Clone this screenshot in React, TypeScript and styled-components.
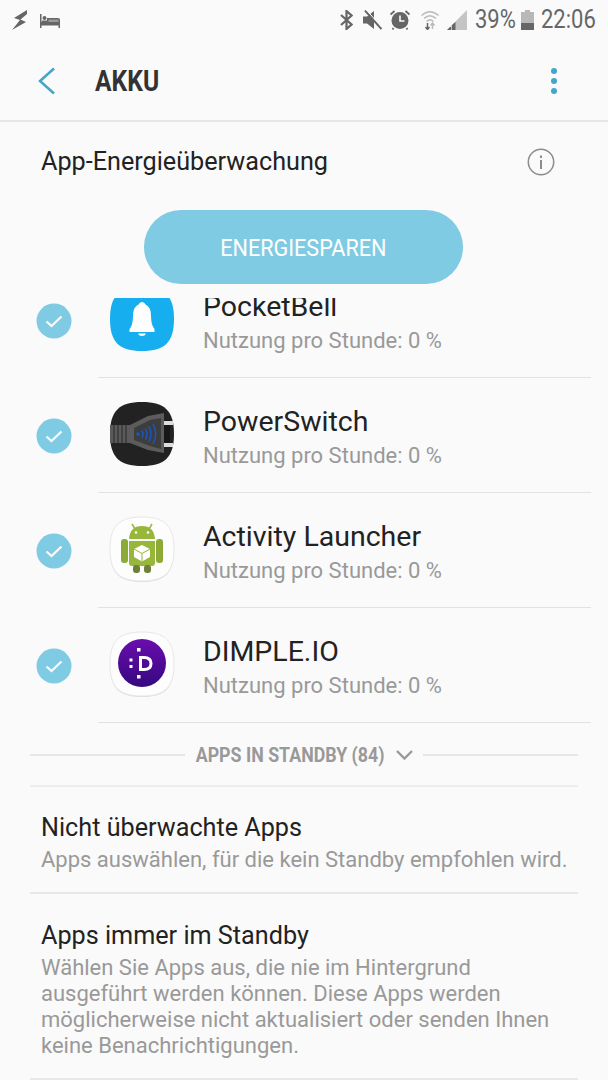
import React from 'react';
import styled, { createGlobalStyle } from 'styled-components';

const GlobalStyle = createGlobalStyle`
    html, body {
        margin: 0;
        padding: 0;
        background: #fafafa;
    }
    * {
        box-sizing: border-box;
    }
`;

const BoltIcon = () => (
    <svg width="15" height="20" viewBox="0 0 15 20">
        <path d="M15 0 L2 8 L8 10 L0 20 L14 12 L8.500 9.500 L15 4 Z" fill="#666" />
    </svg>
);

const BedIcon = () => (
    <svg width="20" height="14" viewBox="0 0 20 14">
        <path d="M0 0 H1.500 V8 H7 V4 H18 Q20 4 20 6 V14 H18.500 V11.500 H1.500 V14 H0 Z" fill="#666" />
        <circle cx="4.500" cy="4" r="2" fill="#666" />
        <rect x="2" y="6.500" width="5" height="1.500" fill="#666" />
        <rect x="8.500" y="5.500" width="10" height="2.500" fill="#9a9a9a" />
    </svg>
);

const BluetoothIcon = () => (
    <svg width="13" height="20" viewBox="0 0 13 20">
        <path d="M1 5 L11.500 14.500 L6.500 19 V1 L11.500 5.500 L1 15" fill="none" stroke="#666" strokeWidth="2.200" />
    </svg>
);

const MuteIcon = () => (
    <svg width="19" height="20" viewBox="0 0 19 20">
        <path d="M0 6.500 H4 L11 1 V19 L4 13.500 H0 Z" fill="#666" />
        <path d="M2 0.500 L18.500 19" stroke="#666" strokeWidth="2" />
        <path d="M3.500 0 L19 17.500" stroke="#fafafa" strokeWidth="1" />
    </svg>
);

const AlarmIcon = () => (
    <svg width="20" height="20" viewBox="0 0 20 20">
        <circle cx="10" cy="10.500" r="8.500" fill="#666" />
        <path d="M10 5.500 V11 H14.500" fill="none" stroke="#fafafa" strokeWidth="1.600" />
        <path d="M0.500 4.500 L4.500 1 M19.500 4.500 L15.500 1 M3.500 18 L2.500 19.500 M16.500 18 L17.500 19.500" stroke="#666" strokeWidth="1.800" />
    </svg>
);

const WifiIcon = () => (
    <svg width="18" height="20" viewBox="0 0 18 20">
        <path d="M0.500 5.500 Q9 -2 17.500 5.500 M3 8.500 Q9 3 15 8.500 M5.500 11.500 Q9 8 12.500 11.500" fill="none" stroke="#bbb" strokeWidth="1.500" />
        <path d="M6.500 13 V19 M4.500 17 L6.500 19.500 L8.500 17" fill="none" stroke="#666" strokeWidth="1.500" />
        <path d="M11.500 19 V13.500 M9.500 15.500 L11.500 13 L13.500 15.500" fill="none" stroke="#bbb" strokeWidth="1.500" />
    </svg>
);

const SignalIcon = () => (
    <svg width="20" height="20" viewBox="0 0 20 20">
        <path d="M20 0 V20 H0 Z" fill="#c4c4c4" />
        <path d="M0 20 L3 17 H4 V20 Z M5 20 V15 L8.500 12 V20 Z" fill="#666" />
    </svg>
);

const BatteryIcon = () => (
    <svg width="13" height="20" viewBox="0 0 13 20">
        <path d="M4 0 H9 V2 H13 V20 H0 V2 H4 Z" fill="#b8b8b8" />
        <rect y="13" width="13" height="7" fill="#666" />
    </svg>
);

const BackIcon = () => (
    <svg width="18" height="28" viewBox="0 0 18 28">
        <path d="M16 1.500 L2 14 L16 26.500" fill="none" stroke="#42a5c9" strokeWidth="2.500" />
    </svg>
);

const MoreIcon = () => (
    <svg width="8" height="28" viewBox="0 0 8 28">
        <circle cx="4" cy="4" r="3" fill="#42a5c9" />
        <circle cx="4" cy="14" r="3" fill="#42a5c9" />
        <circle cx="4" cy="24" r="3" fill="#42a5c9" />
    </svg>
);

const InfoIcon = () => (
    <svg width="28" height="28" viewBox="0 0 28 28">
        <circle cx="14" cy="14" r="12.700" fill="none" stroke="#8c8c8c" strokeWidth="1.500" />
        <rect x="13" y="12" width="2" height="9" fill="#8c8c8c" />
        <rect x="13" y="7.500" width="2" height="2.500" fill="#8c8c8c" />
    </svg>
);

const CheckIcon = () => (
    <svg width="36" height="36" viewBox="0 0 36 36">
        <circle cx="18" cy="18" r="17.500" fill="#7fcbe3" />
        <path d="M10.500 18.500 L15.500 23 L25.500 13.500" fill="none" stroke="#fafafa" strokeWidth="2.300" />
    </svg>
);

const SQUIRCLE = 'M32 0 C55 0 64 9 64 32 C64 55 55 64 32 64 C9 64 0 55 0 32 C0 9 9 0 32 0 Z';

const BellApp = () => (
    <svg width="64" height="64" viewBox="0 0 64 64">
        <path d={SQUIRCLE} fill="#17aef0" />
        <path
            d="M32 15 Q34.500 15 35.500 17.500 Q41 20 41 29 Q41 38 44.500 42 V45 H19.500 V42 Q23 38 23 29 Q23 20 28.500 17.500 Q29.500 15 32 15 Z"
            fill="#fff"
        />
        <path d="M28 46.500 H36 Q35 49 32 49 Q29 49 28 46.500 Z" fill="#fff" />
    </svg>
);

const PlugApp = () => (
    <svg width="64" height="64" viewBox="0 0 64 64">
        <path d={SQUIRCLE} fill="#222" />
        <rect x="0" y="23" width="20" height="18" fill="#5a5a5a" />
        <path d="M4 23 V41 M8 23 V41 M12 23 V41 M16 23 V41" stroke="#333" strokeWidth="1.200" />
        <path d="M20 23 L38 14 L54 11 V51 L38 48 L20 41 Z" fill="#5c5c5c" />
        <path d="M24 26 L40 18 L51 16 V47 L40 44 L24 38 Z" fill="#3d3d3d" />
        <rect x="54" y="18" width="6" height="27" fill="#171717" />
        <rect x="54" y="19" width="9" height="4" fill="#ddd" />
        <rect x="54" y="41" width="9" height="4" fill="#ddd" />
        <circle cx="28" cy="32" r="1.800" fill="#1a56c4" />
        <path
            d="M32 28.500 Q34 32 32 35.500 M35.500 26.500 Q38.500 32 35.500 37.500 M39 24.500 Q43 32 39 39.500 M43 22 Q48.500 32 43 42"
            fill="none"
            stroke="#1a56c4"
            strokeWidth="1.500"
        />
    </svg>
);

const AndroidApp = () => (
    <WhiteTile>
        <path d="M22 7 L25 12 M42 7 L39 12" stroke="#9ab83a" strokeWidth="1.500" />
        <path d="M19 22 Q20 9 32 9 Q44 9 45 22 Z" fill="#97b73a" />
        <circle cx="26" cy="15.500" r="1.300" fill="#fff" />
        <circle cx="38" cy="15.500" r="1.300" fill="#fff" />
        <rect x="11" y="22" width="7" height="24" rx="3" fill="#8cab36" />
        <rect x="46" y="22" width="7" height="24" rx="3" fill="#8cab36" />
        <path d="M19 24 H45 V46 Q45 49 42 49 H22 Q19 49 19 46 Z" fill="#97b73a" />
        <rect x="23" y="48" width="7" height="8" rx="3" fill="#6f7f3a" />
        <rect x="34" y="48" width="7" height="8" rx="3" fill="#6f7f3a" />
        <path d="M32 28 L40 32 V40 L32 44.500 L24 40 V32 Z" fill="#fff" />
        <path d="M24 32 L32 36.500 L40 32 M32 36.500 V44.500" fill="none" stroke="#97b73a" strokeWidth="1" />
    </WhiteTile>
);

const DimpleApp = () => (
    <WhiteTile>
        <defs>
            <linearGradient id="dimple" x1="0" y1="0" x2="0" y2="1">
                <stop offset="0" stopColor="#6a0dad" />
                <stop offset="1" stopColor="#35087f" />
            </linearGradient>
        </defs>
        <circle cx="32" cy="31" r="24" fill="url(#dimple)" />
        <rect x="27" y="16" width="3.500" height="3.500" fill="#fff" />
        <rect x="27" y="43" width="3.500" height="3.500" fill="#fff" />
        <rect x="19.500" y="26.500" width="3" height="3" fill="#fff" />
        <rect x="19.500" y="33" width="3" height="3" fill="#fff" />
        <path d="M30.500 25.500 H34 Q41 25.500 41 31.500 Q41 37.500 34 37.500 H30.500 Z" fill="none" stroke="#fff" strokeWidth="3" />
    </WhiteTile>
);

const WhiteTile = ({ children }: { children: React.ReactNode }) => (
    <svg width="64" height="64" viewBox="0 0 64 64" overflow="visible">
        <path d={SQUIRCLE} fill="#dcdcdc" transform="translate(0 1)" />
        <path d={SQUIRCLE} fill="#fdfdfd" stroke="#e8e8e8" strokeWidth="1" />
        {children}
    </svg>
);

const apps = [
    { name: 'PocketBell', icon: <BellApp /> },
    { name: 'PowerSwitch', icon: <PlugApp /> },
    { name: 'Activity Launcher', icon: <AndroidApp /> },
    { name: 'DIMPLE.IO', icon: <DimpleApp /> },
];

export default function App() {
    return (
        <Page>
            <GlobalStyle />
            <StatusBar>
                <BoltIcon />
                <BedSlot>
                    <BedIcon />
                </BedSlot>
                <StatusRight>
                    <BluetoothIcon />
                    <StatusSlot $left={10}>
                        <MuteIcon />
                    </StatusSlot>
                    <StatusSlot $left={8}>
                        <AlarmIcon />
                    </StatusSlot>
                    <StatusSlot $left={11}>
                        <WifiIcon />
                    </StatusSlot>
                    <StatusSlot $left={8}>
                        <SignalIcon />
                    </StatusSlot>
                    <StatusText $left={8} $width={40}>
                        39%
                    </StatusText>
                    <StatusSlot $left={6}>
                        <BatteryIcon />
                    </StatusSlot>
                    <StatusText $left={7} $width={55}>
                        22:06
                    </StatusText>
                </StatusRight>
            </StatusBar>

            <Toolbar>
                <BackIcon />
                <ToolbarTitle>AKKU</ToolbarTitle>
                <MoreIcon />
            </Toolbar>

            <MonitorRow>
                <MonitorLabel>App-Energieüberwachung</MonitorLabel>
                <InfoIcon />
            </MonitorRow>

            <SaveButton>
                <SaveLabel>ENERGIESPAREN</SaveLabel>
            </SaveButton>

            <AppList>
                <AppListInner>
                    {apps.map((app) => (
                        <AppRow key={app.name}>
                            <CheckIcon />
                            <AppIcon>{app.icon}</AppIcon>
                            <AppText>
                                <AppName>{app.name}</AppName>
                                <AppUsage>Nutzung pro Stunde: 0 %</AppUsage>
                            </AppText>
                        </AppRow>
                    ))}
                </AppListInner>
            </AppList>

            <StandbyHeader>
                <StandbyLine />
                <StandbyLabel>APPS IN STANDBY (84)</StandbyLabel>
                <svg width="17" height="10" viewBox="0 0 17 10">
                    <path d="M1 1 L8.500 8.500 L16 1" fill="none" stroke="#999" strokeWidth="2.400" />
                </svg>
                <StandbyLine />
            </StandbyHeader>

            <SettingItem $top={24}>
                <SettingTitle>Nicht überwachte Apps</SettingTitle>
                <SettingText>Apps auswählen, für die kein Standby empfohlen wird.</SettingText>
            </SettingItem>
            <SettingItem $top={25}>
                <SettingTitle>Apps immer im Standby</SettingTitle>
                <SettingText>
                    Wählen Sie Apps aus, die nie im Hintergrund
                    <br />
                    ausgeführt werden können. Diese Apps werden
                    <br />
                    möglicherweise nicht aktualisiert oder senden Ihnen
                    <br />
                    keine Benachrichtigungen.
                </SettingText>
            </SettingItem>
        </Page>
    );
}

const Page = styled.div`
    width: 608px;
    height: 1080px;
    overflow: hidden;
    background: #fafafa;
    font-family: Roboto, 'Noto Sans', sans-serif;
`;

const StatusBar = styled.div`
    height: 41px;
    padding: 10px 12px 0;
    display: flex;
    align-items: flex-start;
    gap: 13px;
`;

const BedSlot = styled.div`
    margin-top: 3px;
`;

const StatusRight = styled.div`
    margin-left: auto;
    display: flex;
    align-items: center;
`;

const StatusSlot = styled.span<{ $left: number }>`
    display: flex;
    margin-left: ${(p) => p.$left}px;
`;

const StatusText = styled.span<{ $left: number; $width: number }>`
    display: block;
    width: ${(p) => p.$width}px;
    margin-left: ${(p) => p.$left}px;
    font-size: 25px;
    line-height: 20px;
    color: #666;
    white-space: nowrap;
    transform: scaleX(0.88);
    transform-origin: left center;
`;

const Toolbar = styled.div`
    height: 81px;
    padding: 0 50px 0 38px;
    display: flex;
    align-items: center;
    border-bottom: 2px solid #e6e6e6;
`;

const ToolbarTitle = styled.h1`
    margin: 0 auto 0 39px;
    font-size: 29px;
    font-weight: 700;
    color: #333;
    transform: scaleX(0.85);
    transform-origin: left center;
`;

const MonitorRow = styled.div`
    height: 79px;
    padding: 0 53px 0 41px;
    display: flex;
    align-items: center;
    justify-content: space-between;
`;

const MonitorLabel = styled.span`
    font-size: 25.200px;
    color: #222;
`;

const SaveButton = styled.button`
    display: block;
    width: 319px;
    height: 74px;
    margin: 9px 0 14px 144px;
    padding: 2px 0 0;
    border: none;
    border-radius: 37px;
    background: #7fcbe3;
    color: #fff;
    font: 400 24px Roboto, sans-serif;
`;

const SaveLabel = styled.span`
    display: inline-block;
    transform: scaleX(0.9);
`;

const AppList = styled.div`
    height: 425px;
    overflow: hidden;
`;

const AppListInner = styled.div`
    margin-top: -35px;
`;

const AppRow = styled.div`
    position: relative;
    height: 115px;
    padding-left: 36px;
    display: flex;
    align-items: center;

    &::after {
        content: '';
        position: absolute;
        left: 98px;
        right: 17px;
        bottom: 0;
        height: 1px;
        background: #e2e2e2;
    }
`;

const AppIcon = styled.div`
    width: 64px;
    height: 64px;
    margin: 0 0 4px 38px;
`;

const AppText = styled.div`
    margin-left: 29px;
    padding-top: 3px;
`;

const AppName = styled.div`
    font-size: 28.500px;
    line-height: 34px;
    color: #222;
`;

const AppUsage = styled.div`
    margin-top: 3px;
    font-size: 22px;
    line-height: 28px;
    color: #999;
`;

const StandbyHeader = styled.div`
    height: 64px;
    margin: 0 30px;
    padding-top: 2px;
    display: flex;
    align-items: center;
    gap: 10px;
    border-bottom: 2px solid #ededed;
`;

const StandbyLine = styled.div`
    flex: 1;
    height: 2px;
    background: #e6e6e6;
`;

const StandbyLabel = styled.span`
    margin: 0 -11px;
    font-size: 20px;
    font-weight: 700;
    color: #999;
    white-space: nowrap;
    transform: scaleX(0.89);
`;

const SettingItem = styled.div<{ $top: number }>`
    margin: 0 30px;
    padding: ${(p) => p.$top}px 11px 19px;
    border-bottom: 2px solid #e8e8e8;
`;

const SettingTitle = styled.div`
    font-size: 25.200px;
    line-height: 34px;
    color: #222;
`;

const SettingText = styled.div`
    margin-top: 2px;
    font-size: 22px;
    line-height: 26px;
    color: #999;
    white-space: nowrap;
`;
